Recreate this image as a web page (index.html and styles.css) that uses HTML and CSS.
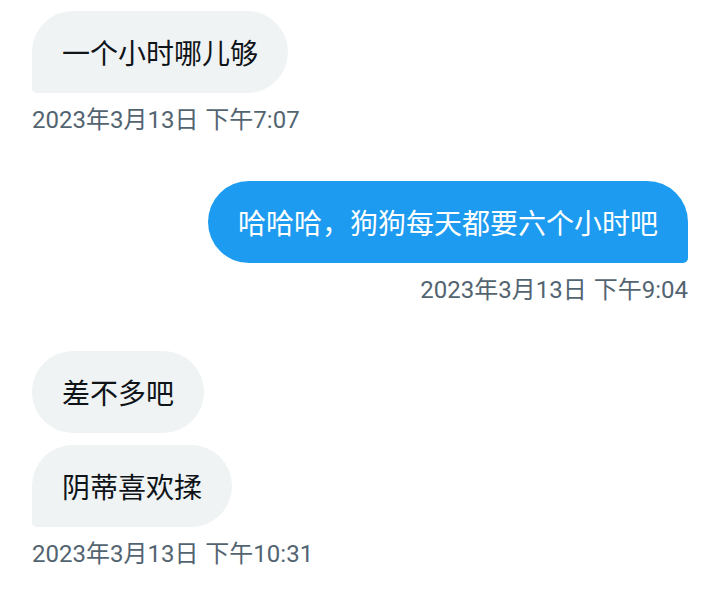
FILE: index.html
```html
<!DOCTYPE html>
<html lang="zh-CN">
<head>
<meta charset="utf-8">
<link rel="stylesheet" href="styles.css">
</head>
<body>
<div class="chat">
  <div class="group in">
    <div class="bubble last">一个小时哪儿够</div>
    <div class="time">2023年3月13日 下午7:07</div>
  </div>
  <div class="group out">
    <div class="bubble last">哈哈哈，狗狗每天都要六个小时吧</div>
    <div class="time">2023年3月13日 下午9:04</div>
  </div>
  <div class="group in">
    <div class="bubble">差不多吧</div>
    <div class="bubble last">阴蒂喜欢揉</div>
    <div class="time">2023年3月13日 下午10:31</div>
  </div>
</div>
</body>
</html>
```

FILE: styles.css
```css
html, body {
  margin: 0;
  padding: 0;
  background: #ffffff;
}
body {
  font-family: "Noto Sans CJK SC", "Noto Sans", sans-serif;
  width: 720px;
  height: 604px;
  overflow: hidden;
}
.chat {
  display: flex;
  flex-direction: column;
  gap: 45px;
  padding: 11px 32px 0 32px;
}
.group {
  display: flex;
  flex-direction: column;
  gap: 12px;
}
.group.in { align-items: flex-start; }
.group.out { align-items: flex-end; }
.bubble {
  font-size: 28px;
  line-height: 40px;
  padding: 21px 30px;
  border-radius: 41px;
  white-space: nowrap;
}
.in .bubble {
  background: #eff3f4;
  color: #0f1419;
}
.out .bubble {
  background: #1d9bf0;
  color: #ffffff;
}
.in .bubble.last { border-bottom-left-radius: 5px; }
.out .bubble.last { border-bottom-right-radius: 5px; }
.time {
  font-family: Roboto, "Noto Sans CJK SC", sans-serif;
  font-size: 24px;
  line-height: 32px;
  color: #536471;
  margin-top: -1px;
  white-space: nowrap;
  word-spacing: 1px;
}
```
